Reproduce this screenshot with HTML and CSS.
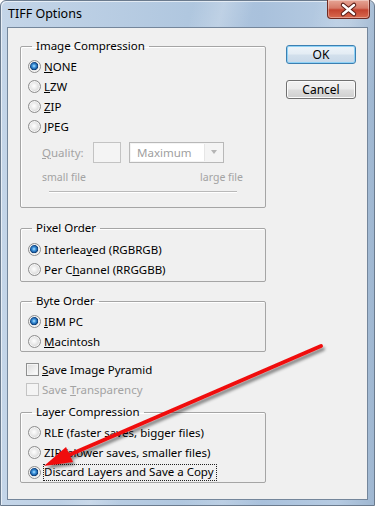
FILE: index.html
```html
<!DOCTYPE html>
<html lang="en">
<head>
    <meta charset="UTF-8">
    <meta name="viewport" content="width=device-width, initial-scale=1.0">
    <title>TIFF Options</title>
    <link rel="stylesheet" href="styles.css">
</head>
<body>

    <div class="window">
        <div class="titlebar">
            <span class="title">TIFF Options</span>
            <button class="close" aria-label="Close">
                <svg width="41" height="17" viewBox="0 0 41 17">
                    <path d="M15 4 L26 13 M26 4 L15 13" stroke="#5a1d16" stroke-width="4.5" stroke-linecap="round"/>
                    <path d="M15 4 L26 13 M26 4 L15 13" stroke="#ffffff" stroke-width="2.4" stroke-linecap="round"/>
                </svg>
            </button>
        </div>

        <div class="client">
            <div class="main">
                <fieldset class="group g-image">
                    <legend>Image Compression</legend>
                    <label class="opt"><input type="radio" name="comp" checked><span><u>N</u>ONE</span></label>
                    <label class="opt"><input type="radio" name="comp"><span><u>L</u>ZW</span></label>
                    <label class="opt"><input type="radio" name="comp"><span><u>Z</u>IP</span></label>
                    <label class="opt"><input type="radio" name="comp"><span><u>J</u>PEG</span></label>

                    <div class="quality">
                        <span class="q-label"><u>Q</u>uality:</span>
                        <span class="q-box"></span>
                        <span class="q-select">
                            <span class="q-value">Maximum</span>
                            <span class="q-arrow"></span>
                        </span>
                    </div>
                    <div class="scale">
                        <span>small file</span>
                        <span>large file</span>
                    </div>
                    <div class="slider"></div>
                </fieldset>

                <fieldset class="group g-pixel">
                    <legend>Pixel Order</legend>
                    <label class="opt"><input type="radio" name="pixel" checked><span>Interlea<u>v</u>ed (RGBRGB)</span></label>
                    <label class="opt"><input type="radio" name="pixel"><span>Per C<u>h</u>annel (RRGGBB)</span></label>
                </fieldset>

                <fieldset class="group g-byte">
                    <legend>Byte Order</legend>
                    <label class="opt"><input type="radio" name="byte" checked><span><u>I</u>BM PC</span></label>
                    <label class="opt"><input type="radio" name="byte"><span><u>M</u>acintosh</span></label>
                </fieldset>

                <div class="checks">
                    <label class="chk"><input type="checkbox"><span><u>S</u>ave Image Pyramid</span></label>
                    <label class="chk disabled"><input type="checkbox" disabled><span>Save <u>T</u>ransparency</span></label>
                </div>

                <fieldset class="group g-layer">
                    <legend>Layer Compression</legend>
                    <label class="opt"><input type="radio" name="layer"><span>RLE (faster saves, bigger files)</span></label>
                    <label class="opt"><input type="radio" name="layer"><span>ZIP (slower saves, smaller files)</span></label>
                    <label class="opt"><input type="radio" name="layer" checked><span class="focus">Discard Layers and Save a Copy</span></label>
                </fieldset>
            </div>

            <div class="side">
                <button class="btn default">OK</button>
                <button class="btn">Cancel</button>
            </div>
        </div>

        <!-- Annotation arrow drawn over the dialog -->
        <svg class="arrow" width="375" height="506" viewBox="0 0 375 506">
            <defs>
                <filter id="shadow" x="-10%" y="-20%" width="130%" height="160%">
                    <feDropShadow dx="2" dy="3" stdDeviation="1.6" flood-color="#000" flood-opacity="0.45"/>
                </filter>
            </defs>
            <g filter="url(#shadow)">
                <line x1="321" y1="346" x2="69" y2="455" stroke="#f01010" stroke-width="4" stroke-linecap="round"/>
                <polygon points="44,466 73,462 66,447" fill="#f01010"/>
            </g>
        </svg>
    </div>

</body>
</html>
```

FILE: styles.css
```css
* {
    box-sizing: border-box;
}

body {
    margin: 0;
    font-family: "Noto Sans", "Open Sans", sans-serif;
    font-size: 11.5px;
    color: #000000;
}

/* Vista-Rahmen */
.window {
    position: relative;
    width: 375px;
    height: 506px;
    border: 1px solid #6b7b8e;
    border-radius: 6px 6px 0 0;
    padding: 0 6px 5px 6px;
    display: flex;
    flex-direction: column;
    background:
        linear-gradient(105deg, rgba(255,255,255,0) 38%, rgba(255,255,255,0.22) 44%, rgba(255,255,255,0) 50%, rgba(255,255,255,0) 62%, rgba(255,255,255,0.18) 70%, rgba(255,255,255,0) 78%),
        linear-gradient(to right, #c4d5e8 0%, #b0c7df 50%, #a9c1dc 70%, #b6cbe2 90%, #9fb7d1 100%);
    box-shadow: inset 1px 1px 0 rgba(255,255,255,0.6);
}

.titlebar {
    height: 26px;
    display: flex;
    justify-content: space-between;
    align-items: flex-start;
}

.title {
    padding: 5px 0 0 1px;
    font-size: 12.5px;
    line-height: 16px;
}

.close {
    width: 43px;
    height: 19px;
    margin: -1px -2px 0 0;
    padding: 0;
    border: 1px solid #6e2a22;
    border-top: none;
    border-radius: 0 0 4px 4px;
    background: linear-gradient(#e6a595 0%, #d67a68 45%, #c4432f 55%, #d86a4f 100%);
    box-shadow: inset 0 0 0 1px rgba(255,255,255,0.35);
    display: flex;
    align-items: center;
    justify-content: center;
}

.client {
    flex: 1;
    background-color: #f0f0f0;
    border: 1px solid #74869b;
    padding: 10px 0 0 12px;
    display: flex;
    gap: 20px;
}

.main {
    width: 246px;
}

/* Gruppenrahmen */
.group {
    margin: 0;
    padding: 2px 0 0 7px;
    border: 1px solid #a5a5a5;
    border-radius: 2px;
    box-shadow: inset 1px 1px 0 #ffffff;
}

.group legend {
    margin-left: 4px;
    padding: 0 4px;
    line-height: 16px;
}

.g-image {
    height: 170px;
}

.g-pixel {
    margin-top: 12px;
    padding-top: 3px;
    height: 62px;
}

.g-byte {
    margin-top: 11px;
    height: 59px;
}

.g-layer {
    margin-top: 5px;
    height: 79px;
}

.opt,
.chk {
    display: flex;
    align-items: center;
    height: 20px;
    gap: 3px;
    white-space: nowrap;
}

.opt input[type="radio"] {
    -webkit-appearance: none;
    appearance: none;
    width: 13px;
    height: 13px;
    margin: 0;
    border: 1px solid #8d8d8d;
    border-radius: 50%;
    background: radial-gradient(circle at 5px 5px, #ffffff 0, #ececec 3px, #d4d4d4 6px);
    box-shadow: inset 0 0 0 1px #f6f6f6;
}

.opt input[type="radio"]:checked {
    background: radial-gradient(circle at 5px 5px, #bfe6ff 0, #4aa0e4 1.5px, #14549a 3.4px, #0c3566 4px, #e3e3e3 4.5px, #f8f8f8 6px);
}

.focus {
    border: 1px dotted #222222;
    margin-left: -1px;
    padding: 0 2px 1px 0;
    line-height: 14px;
}

/* Qualität (deaktiviert) */
.quality {
    display: flex;
    align-items: center;
    height: 22px;
    margin-top: 5px;
    padding-left: 14px;
    color: #a3a3a3;
}

.q-label {
    width: 51px;
}

.q-box {
    width: 28px;
    height: 21px;
    border: 1px solid #c3c3c3;
    background-color: #f4f4f4;
}

.q-select {
    display: flex;
    width: 95px;
    height: 21px;
    margin-left: 8px;
    border: 1px solid #b8b8b8;
    background-color: #f4f4f4;
}

.q-value {
    flex: 1;
    padding: 1px 0 0 6px;
    background-color: #ffffff;
    border-right: 1px solid #e6e6e6;
    color: #a0a0a0;
    margin: 1px 0 1px 1px;
    line-height: 16px;
}

.q-arrow {
    width: 18px;
    display: flex;
    align-items: center;
    justify-content: center;
}

.q-arrow::after {
    content: "";
    border-left: 3.5px solid transparent;
    border-right: 3.5px solid transparent;
    border-top: 4px solid #b5b5b5;
}

.scale {
    display: flex;
    justify-content: space-between;
    width: 201px;
    margin: 7px 0 0 14px;
    font-size: 10.5px;
    line-height: 14px;
    color: #a3a3a3;
}

.slider {
    width: 188px;
    height: 2px;
    margin: 7px 0 0 21px;
    border-top: 1px solid #b9b9b9;
    border-bottom: 1px solid #ffffff;
}

/* Kontrollkästchen */
.checks {
    margin-top: 7px;
}

.chk input[type="checkbox"] {
    -webkit-appearance: none;
    appearance: none;
    width: 13px;
    height: 13px;
    margin: 0 0 0 6px;
    border: 1px solid #8e8f8f;
    background: linear-gradient(135deg, #dadada, #ffffff);
    box-shadow: inset 0 0 0 1px #f4f4f4;
}

.chk.disabled {
    color: #a3a3a3;
}

.chk.disabled input[type="checkbox"] {
    border-color: #c4c4c4;
    background: #f4f4f4;
}

/* Schaltflächen */
.side {
    display: flex;
    flex-direction: column;
    gap: 16px;
    padding-top: 7px;
}

.btn {
    width: 70px;
    height: 19px;
    padding: 0;
    font: inherit;
    font-size: 12px;
    line-height: 15px;
    color: #000000;
    border: 1px solid #707070;
    border-radius: 3px;
    background: linear-gradient(#f2f2f2 0%, #ebebeb 48%, #dddddd 52%, #cfcfcf 100%);
    box-shadow: inset 0 0 0 1px #fbfbfb;
}

.btn.default {
    border-color: #3c7fb1;
    background: linear-gradient(#eef4f9 0%, #e3ecf4 48%, #d3e0ec 52%, #c8d8e8 100%);
    box-shadow: inset 0 0 0 1px #8fd2f6;
}

.arrow {
    position: absolute;
    left: -1px;
    top: -1px;
    pointer-events: none;
}
```
